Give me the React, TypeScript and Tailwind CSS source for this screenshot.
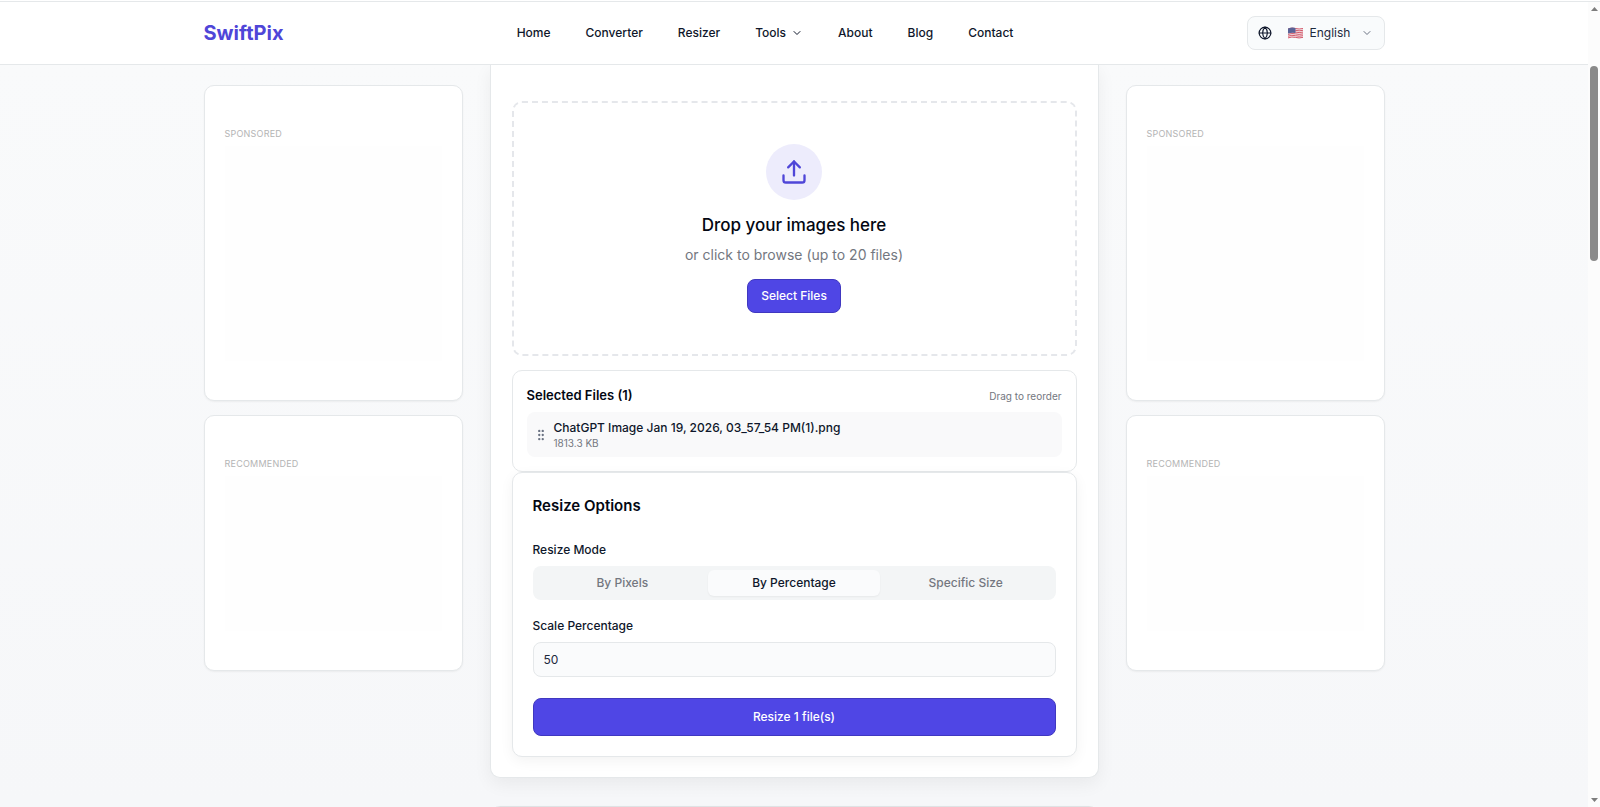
import { useState } from "react";
import { ChevronDown, Globe, GripVertical, Upload } from "lucide-react";

const navLinks = ["Home", "Converter", "Resizer", "Tools", "About", "Blog", "Contact"];

const resizeModes = ["By Pixels", "By Percentage", "Specific Size"];

const selectedFiles = [{ name: "ChatGPT Image Jan 19, 2026, 03_57_54 PM(1).png", size: "1813.3 KB" }];

const UsFlag = () => (
  <svg className="h-3 w-[15px] shrink-0" viewBox="0 0 15 12" aria-hidden="true">
    <path d="M0 1.5 Q4 0 7.500 1 T15 1 V10.500 Q11 12 7.500 11 T0 11 Z" fill="#f3e9ec" />
    <path
      d="M0 2 Q4 .5 7.500 1.500 T15 1.500 M0 3.800 Q4 2.300 7.500 3.300 T15 3.300 M0 5.600 Q4 4.100 7.500 5.100 T15 5.100 M0 7.400 Q4 5.900 7.500 6.900 T15 6.900 M0 9.200 Q4 7.700 7.500 8.700 T15 8.700 M0 10.900 Q4 9.400 7.500 10.400 T15 10.400"
      fill="none"
      stroke="#cf4a5c"
      strokeWidth="0.9"
    />
    <path d="M0 1.500 Q4 0 7.500 1 V6 Q4 5.200 0 6.500 Z" fill="#5a6296" />
  </svg>
);

const Header = () => (
  <header className="border-b border-[#e5e8ea] bg-white">
    <div className="mx-auto flex h-[62px] max-w-[1181px] items-center justify-between">
      <a href="#" className="text-xl leading-7 font-bold text-[#4f46d8]">
        SwiftPix
      </a>
      <nav className="flex items-center gap-[35px]">
        {navLinks.map((link) => (
          <a key={link} href="#" className="flex items-center gap-[5px] text-xs font-medium text-slate-900">
            {link}
            {link === "Tools" && <ChevronDown className="size-3" />}
          </a>
        ))}
      </nav>
      <label className="relative flex h-[34px] w-[138px] items-center rounded-lg border border-[#e5e8ea] bg-[#f9fbfc] pl-[10px] text-slate-900">
        <Globe className="size-[14px] shrink-0" />
        <span className="ml-4">
          <UsFlag />
        </span>
        <select
          aria-label="Language"
          className="absolute inset-0 w-full appearance-none rounded-lg bg-transparent pl-[62px] text-xs text-slate-800 outline-none"
        >
          <option>English</option>
        </select>
        <ChevronDown className="pointer-events-none absolute right-[11px] size-3 text-gray-500" />
      </label>
    </div>
  </header>
);

const AdCard = ({ label, tall = false }: { label: string; tall?: boolean }) => (
  <div className="rounded-[10px] border border-[#e5e8ea] bg-white px-5 pt-10 pb-[39px] shadow-xs">
    <p className="text-[9px] leading-4 tracking-wide text-[#b4b4b4] uppercase">{label}</p>
    <div className={`mt-1 bg-[#fefefe] ${tall ? "h-[215px]" : "h-[155px]"}`} />
  </div>
);

const AdColumn = () => (
  <aside className="flex flex-col gap-[14px] pt-5">
    <AdCard label="Sponsored" tall />
    <AdCard label="Recommended" />
  </aside>
);

const DropZone = () => (
  <div className="flex flex-col items-center rounded-[10px] border-2 border-dashed border-gray-200 px-5 py-[41px]">
    <div className="flex size-14 items-center justify-center rounded-full bg-[#edecfc]">
      <Upload className="size-7 text-[#4f46d8]" />
    </div>
    <h2 className="mt-[13px] text-[17px] leading-6 font-medium text-gray-950">Drop your images here</h2>
    <p className="mt-2 text-sm leading-5 text-[#737780]">or click to browse (up to 20 files)</p>
    <button
      type="button"
      className="mt-[14px] h-[34px] rounded-lg border border-[#4038c0] bg-[#4f46e5] px-[13px] text-xs font-medium text-white"
    >
      Select Files
    </button>
  </div>
);

const FileList = () => (
  <section className="mt-[14px] rounded-[10px] border border-[#e5e8ea] p-[14px]">
    <div className="flex h-[22px] items-center justify-between">
      <h3 className="text-[13px] font-semibold text-gray-950">Selected Files (1)</h3>
      <span className="text-[10px] text-[#737780]">Drag to reorder</span>
    </div>
    <ul className="mt-[5px]">
      {selectedFiles.map((file) => (
        <li key={file.name} className="flex h-[45px] items-center gap-[6px] rounded-lg bg-[#f9f9fa] px-[7px]">
          <GripVertical className="size-[14px] text-gray-500" />
          <div>
            <p className="text-xs leading-4 font-medium text-slate-900">{file.name}</p>
            <p className="text-[10px] leading-[14px] text-[#737780]">{file.size}</p>
          </div>
        </li>
      ))}
    </ul>
  </section>
);

const ResizeOptions = () => {
  const [mode, setMode] = useState("By Percentage");
  const [scale, setScale] = useState("50");

  return (
    <section className="rounded-[10px] border border-[#e5e8ea] bg-white px-5 pt-[21px] pb-5 shadow-[0_4px_14px_rgba(0,0,0,0.05)]">
      <h3 className="text-[15px] leading-6 font-semibold text-gray-950">Resize Options</h3>

      <p className="mt-6 text-xs leading-4 font-medium text-slate-900">Resize Mode</p>
      <div role="tablist" className="mt-2 grid h-[34px] grid-cols-3 rounded-lg bg-[#f3f5f6] p-1">
        {resizeModes.map((item) => (
          <button
            key={item}
            type="button"
            role="tab"
            aria-selected={mode === item}
            onClick={() => setMode(item)}
            className={`rounded-md text-xs font-medium ${
              mode === item ? "bg-[#fafbfc] text-slate-900 shadow-xs" : "text-[#737780]"
            }`}
          >
            {item}
          </button>
        ))}
      </div>

      <label htmlFor="scale" className="mt-[18px] block text-xs leading-4 font-medium text-slate-900">
        Scale Percentage
      </label>
      <input
        id="scale"
        type="text"
        value={scale}
        onChange={(e) => setScale(e.target.value)}
        className="mt-2 h-[35px] w-full rounded-lg border border-[#e5e8ea] bg-[#fafbfc] px-[10px] text-xs text-slate-800 outline-none"
      />

      <button
        type="button"
        className="mt-[21px] h-[38px] w-full rounded-lg border border-[#4038c0] bg-[#4f46e5] text-xs font-medium text-white"
      >
        Resize 1 file(s)
      </button>
    </section>
  );
};

const Scrollbar = () => (
  <div className="flex w-3 shrink-0 flex-col items-center justify-between bg-[#fcfcfc] py-[5px]" aria-hidden="true">
    <div className="flex flex-col items-center gap-[55px]">
      <svg className="h-1 w-[7px]" viewBox="0 0 7 4">
        <path d="M0 4 L3.500 0 L7 4 Z" fill="#7d7d7d" />
      </svg>
      <div className="h-[195px] w-2 rounded-full bg-[#8a8a8a]" />
    </div>
    <svg className="h-1 w-[7px]" viewBox="0 0 7 4">
      <path d="M0 0 L3.500 4 L7 0 Z" fill="#7d7d7d" />
    </svg>
  </div>
);

export default function App() {
  return (
    <div className="flex h-screen flex-col bg-white pt-px font-['Inter',sans-serif]">
      <div className="flex min-h-0 flex-1 border-t border-[#e5e8ea]">
        <div className="flex min-w-0 flex-1 flex-col">
          <Header />
          <main className="min-h-0 flex-1 overflow-hidden bg-linear-to-b from-[#f9fafb] to-[#f6f7f9]">
            <div className="mx-auto grid max-w-[1181px] grid-cols-[259px_1fr_259px] gap-x-[27px]">
              <AdColumn />
              <div>
                <div className="rounded-b-[10px] border border-t-0 border-[#e5e8ea] bg-white px-[21px] pt-9 pb-5 shadow-[0_6px_18px_rgba(0,0,0,0.06)]">
                  <DropZone />
                  <FileList />
                  <ResizeOptions />
                </div>
                <div className="mt-7 h-40 rounded-[10px] border border-[#dfe2e4] bg-white shadow-md" />
              </div>
              <AdColumn />
            </div>
          </main>
        </div>
        <Scrollbar />
      </div>
    </div>
  );
}
